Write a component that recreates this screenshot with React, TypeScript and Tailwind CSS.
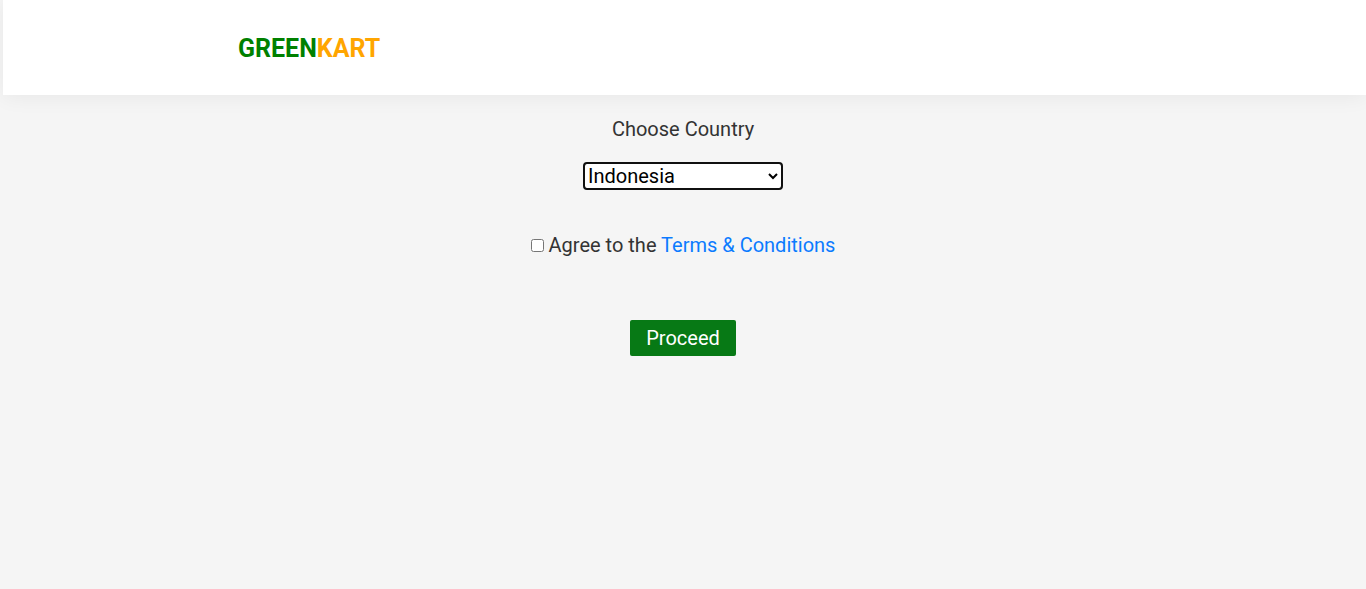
export default function App() {
  return (
    <div className="flex min-h-screen flex-col bg-[#f5f5f5] font-[Roboto,sans-serif] text-[20px] leading-6 text-[#333]">
      <header className="ml-[3px] flex h-[95px] items-center bg-white pl-[235px] pt-0.5 shadow-[0_2px_20px_rgba(0,0,0,0.06)]">
        <div className="text-[25px] font-bold leading-8 text-[#008000]">
          GREEN<span className="text-[#ffa500]">KART</span>
        </div>
      </header>
      <main className="flex flex-col items-center pt-[22px]">
        <label htmlFor="country">Choose Country</label>
        <select
          id="country"
          className="mt-[22px] h-[26px] w-[198px] rounded-[3px] border-x border-[#101010] bg-white pb-0.5 text-black outline-2 -outline-offset-1 outline-[#101010] -indent-px"
        >
          <option>Indonesia</option>
        </select>
        <div className="mt-[44px] flex items-center">
          <input type="checkbox" className="mr-[5px] size-[13px]" />
          <span>
            Agree to the <a className="text-[#0b7bff]">Terms &amp; Conditions</a>
          </span>
        </div>
        <button className="mt-[63px] h-9 w-[106px] rounded-[2px] bg-[#077915] text-white">
          Proceed
        </button>
      </main>
    </div>
  );
}
